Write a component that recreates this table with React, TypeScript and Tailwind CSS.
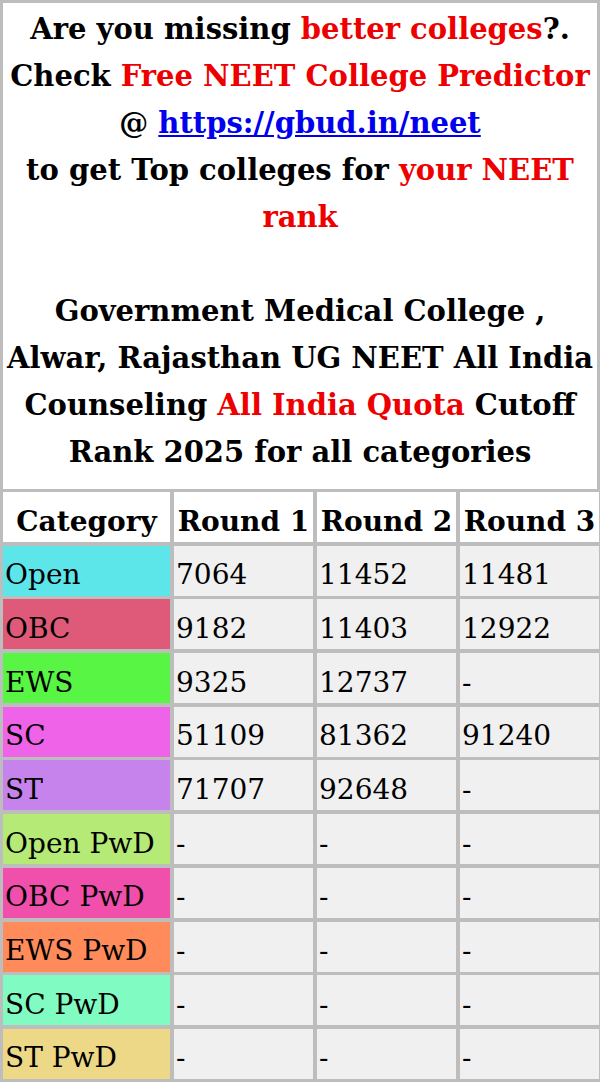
import React from 'react';

type Row = { name: string; color: string; r1: string; r2: string; r3: string };

const rows: Row[] = [
    { name: 'Open', color: 'bg-[#5ce6ea]', r1: '7064', r2: '11452', r3: '11481' },
    { name: 'OBC', color: 'bg-[#de5a78]', r1: '9182', r2: '11403', r3: '12922' },
    { name: 'EWS', color: 'bg-[#58f545]', r1: '9325', r2: '12737', r3: '-' },
    { name: 'SC', color: 'bg-[#ef63e9]', r1: '51109', r2: '81362', r3: '91240' },
    { name: 'ST', color: 'bg-[#c683ec]', r1: '71707', r2: '92648', r3: '-' },
    { name: 'Open PwD', color: 'bg-[#b5ea76]', r1: '-', r2: '-', r3: '-' },
    { name: 'OBC PwD', color: 'bg-[#f04fab]', r1: '-', r2: '-', r3: '-' },
    { name: 'EWS PwD', color: 'bg-[#ff8b5a]', r1: '-', r2: '-', r3: '-' },
    { name: 'SC PwD', color: 'bg-[#80fcc2]', r1: '-', r2: '-', r3: '-' },
    { name: 'ST PwD', color: 'bg-[#ecd886]', r1: '-', r2: '-', r3: '-' },
];

const Red = ({ children }: { children: React.ReactNode }) => <span className="text-[#ee0000]">{children}</span>;

export default function App() {
    return (
        <div className="w-[600px] h-[1082px] bg-[#bdbdbd] p-[3px] flex flex-col gap-[3px] font-['DejaVu_Serif',serif] text-black overflow-hidden">
            {/* banner cell */}
            <div className="bg-white h-[486px] pt-[3px] text-center font-bold text-[29px] leading-[47px]">
                Are you missing <Red>better colleges</Red>?.
                <br />
                Check <Red>Free NEET College Predictor</Red>
                <br />
                @ <a href="#" className="text-[#0000ee] underline">https://gbud.in/neet</a>
                <br />
                to get Top colleges for <Red>your NEET rank</Red>
                <br />
                <br />
                Government Medical College , Alwar, Rajasthan UG NEET All India Counseling{' '}
                <Red>All India Quota</Red> Cutoff Rank 2025 for all categories
            </div>

            {/* cutoff table */}
            <div className="grid grid-cols-[167px_139px_139px_139px] gap-x-[4px] gap-y-[3.7px] text-[28px]">
                {['Category', 'Round 1', 'Round 2', 'Round 3'].map(h => (
                    <div key={h} className="bg-white h-[50px] pt-[9px] flex items-center justify-center font-bold whitespace-nowrap">
                        {h}
                    </div>
                ))}
                {rows.map(r => (
                    <React.Fragment key={r.name}>
                        <div className={`${r.color} h-[50px] pt-[9px] flex items-center px-[2px] whitespace-nowrap`}>{r.name}</div>
                        <div className="bg-[#f0f0f0] h-[50px] pt-[9px] flex items-center px-[2px]">{r.r1}</div>
                        <div className="bg-[#f0f0f0] h-[50px] pt-[9px] flex items-center px-[2px]">{r.r2}</div>
                        <div className="bg-[#f0f0f0] h-[50px] pt-[9px] flex items-center px-[2px]">{r.r3}</div>
                    </React.Fragment>
                ))}
            </div>
        </div>
    );
}
